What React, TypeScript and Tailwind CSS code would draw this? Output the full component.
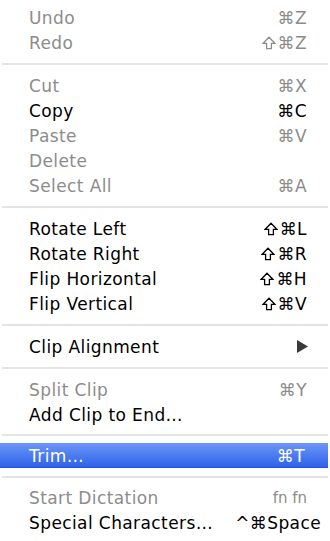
import React from "react";

type Item =
  | { kind: "sep"; h?: number }
  | {
      kind: "item";
      label: string;
      shortcut?: string;
      disabled?: boolean;
      highlighted?: boolean;
      submenu?: boolean;
      wide?: boolean;
    };

const items: Item[] = [
  { kind: "item", label: "Undo", shortcut: "⌘Z", disabled: true },
  { kind: "item", label: "Redo", shortcut: "⇧⌘Z", disabled: true },
  { kind: "sep" },
  { kind: "item", label: "Cut", shortcut: "⌘X", disabled: true },
  { kind: "item", label: "Copy", shortcut: "⌘C" },
  { kind: "item", label: "Paste", shortcut: "⌘V", disabled: true },
  { kind: "item", label: "Delete", disabled: true },
  { kind: "item", label: "Select All", shortcut: "⌘A", disabled: true },
  { kind: "sep" },
  { kind: "item", label: "Rotate Left", shortcut: "⇧⌘L" },
  { kind: "item", label: "Rotate Right", shortcut: "⇧⌘R" },
  { kind: "item", label: "Flip Horizontal", shortcut: "⇧⌘H" },
  { kind: "item", label: "Flip Vertical", shortcut: "⇧⌘V" },
  { kind: "sep" },
  { kind: "item", label: "Clip Alignment", submenu: true },
  { kind: "sep" },
  { kind: "item", label: "Split Clip", shortcut: "⌘Y", disabled: true },
  { kind: "item", label: "Add Clip to End…" },
  { kind: "sep", h: 16 },
  { kind: "item", label: "Trim…", shortcut: "⌘T", highlighted: true },
  { kind: "sep", h: 17 },
  { kind: "item", label: "Start Dictation", shortcut: "fn fn", disabled: true },
  { kind: "item", label: "Special Characters…", shortcut: "^⌘Space", wide: true },
];

function ShiftGlyph() {
  return (
    <svg width="14" height="14" viewBox="0 0 14 14" className="mr-[2px] mb-[1px]">
      <path
        d="M7 1.2 L12.8 7.3 L9.4 7.3 L9.4 12.6 L4.6 12.6 L4.6 7.3 L1.2 7.3 Z"
        fill="none"
        stroke="currentColor"
        strokeWidth="1.3"
        strokeLinejoin="miter"
      />
    </svg>
  );
}

function Shortcut({ text }: { text: string }) {
  if (text.startsWith("⇧")) {
    return (
      <span className="flex items-center">
        <ShiftGlyph />
        <span>{text.slice(1)}</span>
      </span>
    );
  }
  return <span>{text}</span>;
}

export default function App() {
  return (
    <div
      className="w-[330px] h-[541px] bg-white flex flex-col pt-[5px] overflow-hidden text-[17px] leading-none tracking-[0.4px]"
      style={{ fontFamily: '"DejaVu Sans", "Liberation Sans", sans-serif' }}
    >
      {items.map((it, i) => {
        if (it.kind === "sep") {
          return (
            <div
              key={i}
              className={
                "flex items-center pl-[2px] pr-[2px] " +
                (it.h === 16 ? "h-[16px]" : it.h === 17 ? "h-[17px]" : "h-[18px]")
              }
            >
              <div className="h-[2px] w-full bg-[#e4e4e4]" />
            </div>
          );
        }
        const color = it.highlighted
          ? "text-white"
          : it.disabled
          ? "text-[#8c8c8c]"
          : "text-black";
        return (
          <div
            key={i}
            className={
              "h-[25px] flex items-center justify-between pl-[29px] pr-[23px] " +
              color +
              (it.highlighted
                ? " bg-gradient-to-b from-[#6c95f6] to-[#2e62ea] border-b border-[#2456dc] mr-[2px]"
                : "")
            }
          >
            <span className="pt-[2px] whitespace-nowrap">{it.label}</span>
            {it.shortcut && (
              <span
                className={
                  "pt-[2px] whitespace-nowrap flex items-center " +
                  (it.wide ? "mr-[-14px]" : "") +
                  (it.shortcut === "fn fn" ? " text-[15px] tracking-normal" : "")
                }
              >
                <Shortcut text={it.shortcut} />
              </span>
            )}
            {it.submenu && (
              <svg width="11" height="13" viewBox="0 0 11 13" className="mr-[-1px]">
                <path d="M0 0 L11 6.5 L0 13 Z" fill="#3a3a3a" />
              </svg>
            )}
          </div>
        );
      })}
    </div>
  );
}
